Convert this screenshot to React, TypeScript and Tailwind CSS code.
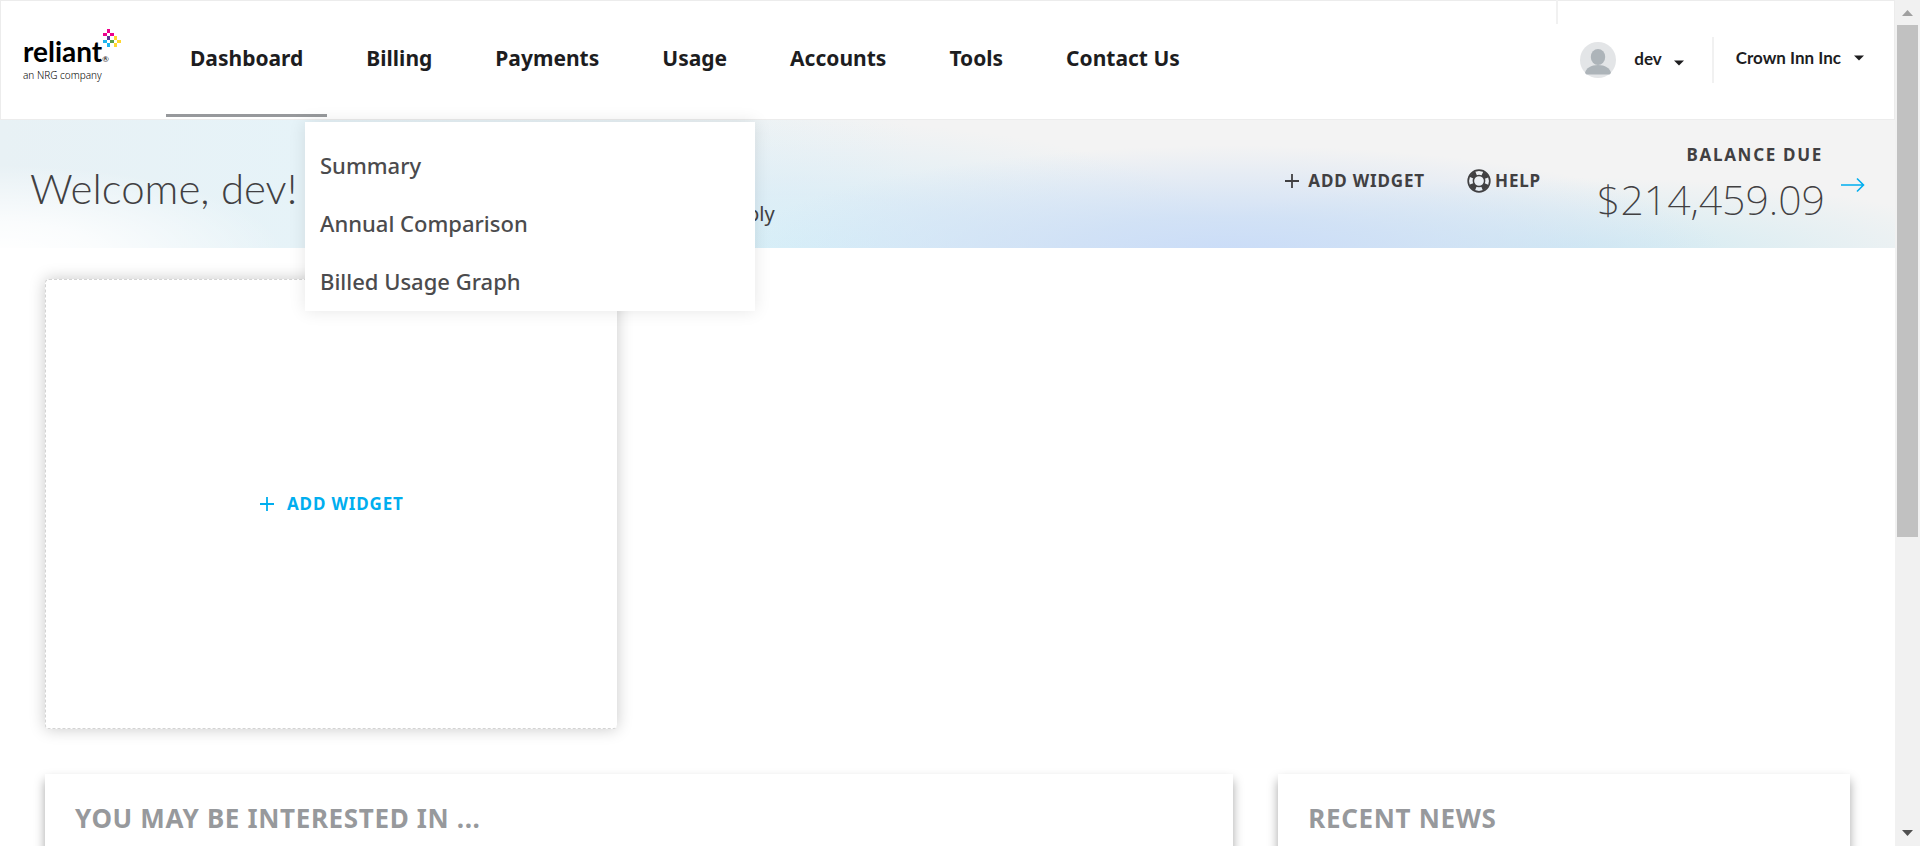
import type { ReactNode } from "react";

const navItems = ["Dashboard", "Billing", "Payments", "Usage", "Accounts", "Tools", "Contact Us"];
const menuItems = ["Summary", "Annual Comparison", "Billed Usage Graph"];

function Logo() {
  return (
    <a href="#" aria-label="reliant, an NRG company" className="relative block w-[100px] shrink-0 text-black">
      <span className="block font-['Lato',sans-serif] text-[28px] leading-[34px] font-bold">
        reliant<span className="text-[8px] leading-none font-normal">®</span>
      </span>
      <span className="block text-[10px] leading-[14px] font-light whitespace-nowrap">an NRG company</span>
      <svg className="absolute -top-[6px] left-[77px]" width="21" height="20" viewBox="0 0 21 20" aria-hidden="true">
        <path d="M7 1h3v4H7z M3 5h4v3H3z M10 5h4v3h-4z" fill="#ec008c" />
        <path d="M7 8h3v4H7z" fill="#5b3a94" />
        <path d="M14 8h3v4h-3z M17 12h4v3h-4z M14 15h3v4h-3z" fill="#ffd72e" />
        <path d="M10 12h4v3h-4z" fill="#5a9e45" />
        <path d="M3 12h4v3H3z M7 15h3v4H7z" fill="#1cb5f0" />
      </svg>
    </a>
  );
}

function Caret() {
  return (
    <svg width="10" height="6" viewBox="0 0 10 6" aria-hidden="true">
      <path d="M0 0.5h10L5 5.5z" fill="#1d1d1f" />
    </svg>
  );
}

function Plus() {
  return (
    <svg width="16" height="16" viewBox="0 0 16 16" aria-hidden="true">
      <path d="M8 1v14M1 8h14" stroke="currentColor" strokeWidth="1.8" fill="none" />
    </svg>
  );
}

function Avatar() {
  return (
    <svg width="36" height="36" viewBox="0 0 36 36" aria-hidden="true">
      <circle cx="18" cy="18" r="18" fill="#e3e5e7" />
      <ellipse cx="18" cy="15" rx="7.2" ry="8" fill="#adb4b9" />
      <path d="M5 31c1-5 6-8 13-8s12 3 13 8l-1.500 1.500h-23z" fill="#adb4b9" />
    </svg>
  );
}

function LifeRing() {
  return (
    <svg width="24" height="24" viewBox="0 0 24 24" fill="none" aria-hidden="true">
      <circle cx="12" cy="12" r="8" stroke="#414042" strokeWidth="5" strokeDasharray="6.283 6.283" strokeDashoffset="-3.142" />
      <circle cx="12" cy="12" r="10.800" stroke="#414042" strokeWidth="1.700" />
      <circle cx="12" cy="12" r="5.600" stroke="#414042" strokeWidth="1.500" />
    </svg>
  );
}

function Panel({ title, className }: { title: string; className: string }) {
  return (
    <section className={"h-[300px] bg-white px-[30px] pt-[26px] shadow-[0_6px_10px_rgba(0,0,0,0.35)] " + className}>
      <h2 className="text-[26px] leading-9 font-bold tracking-wide text-[#97999c]">{title}</h2>
    </section>
  );
}

function ToolButton({ icon, children, className }: { icon: ReactNode; children: string; className: string }) {
  return (
    <button
      type="button"
      className={"flex items-center text-[17px] leading-6 font-bold tracking-wider whitespace-nowrap " + className}
    >
      {icon}
      {children}
    </button>
  );
}

export default function App() {
  return (
    <div className="flex h-screen bg-white font-['Noto_Sans',sans-serif] text-[#414042]">
      <div className="relative flex min-w-0 flex-1 flex-col overflow-hidden">
        <header className="relative flex h-[120px] shrink-0 items-stretch border border-[#ececec] bg-white pr-[30px] pl-[22px]">
          <div className="flex items-start pt-[33px]">
            <Logo />
          </div>
          <nav className="ml-[43px] flex gap-[15px] pb-[2px]">
            {navItems.map((item, i) => (
              <a
                key={item}
                href="#"
                className={
                  "border-b-[3px] px-6 pt-[42px] text-[21px] leading-[30px] font-bold whitespace-nowrap text-[#1d1d1f] " +
                  (i === 0 ? "border-[#97999c]" : "border-transparent")
                }
              >
                {item}
              </a>
            ))}
          </nav>
          <div className="relative ml-auto flex items-start pt-9 font-['Lato',sans-serif] text-[17px] font-bold text-[#1d1d1f]">
            <span className="absolute -top-px -left-6 h-6 w-[2px] bg-[#f1f1f1]" />
            <button type="button" className="mt-[5px] flex items-center">
              <Avatar />
              <span className="-mt-[2px] ml-[18px]">dev</span>
              <span className="mt-[6px] ml-3">
                <Caret />
              </span>
            </button>
            <span className="ml-7 h-[46px] w-[2px] bg-[#f1f1f1]" />
            <button type="button" className="ml-[22px] flex h-[42px] items-center gap-[13px] whitespace-nowrap">
              Crown Inn Inc
              <Caret />
            </button>
          </div>
        </header>

        <section className="flex h-32 shrink-0 items-start bg-[#f3f3f3] bg-[radial-gradient(ellipse_15%_70%_at_0%_105%,rgba(255,255,255,1)_0%,rgba(255,255,255,0.8)_35%,rgba(255,255,255,0)_100%),radial-gradient(ellipse_26%_85%_at_65%_105%,rgba(200,219,248,0.95)_0%,rgba(205,223,246,0.85)_35%,rgba(243,243,243,0)_100%),radial-gradient(ellipse_22%_60%_at_83%_105%,rgba(203,233,242,0.9)_0%,rgba(203,233,242,0)_100%),radial-gradient(ellipse_24%_105%_at_42%_105%,rgba(215,240,248,1)_0%,rgba(215,236,247,0.7)_45%,rgba(243,243,243,0)_100%),linear-gradient(90deg,#e8f1f5_0%,#e6f3f8_16%,#e8f2f6_34%,#f3f3f3_48%,#f3f3f3_100%)] pr-[30px] pl-[30px]">
          <h1 className="w-[717px] shrink-0 pt-[40px] font-['Lato',sans-serif] text-[42px] leading-[56px] font-light whitespace-nowrap">
            Welcome, dev!
          </h1>
          <p className="pt-[80px] text-[20px] leading-7">ply</p>
          <div className="ml-auto flex">
            <ToolButton icon={<Plus />} className="mt-[49px] h-6 gap-2">
              ADD WIDGET
            </ToolButton>
            <ToolButton icon={<LifeRing />} className="mt-[49px] ml-[42px] h-6 gap-1">
              HELP
            </ToolButton>
            <div className="ml-14 pt-[23px] text-right">
              <h2 className="pr-[2px] text-[17px] leading-6 font-bold tracking-widest">BALANCE DUE</h2>
              <p className="pt-1 text-[41px] leading-[56px] font-extralight">$214,459.09</p>
            </div>
            <a href="#" aria-label="View balance" className="mt-[57px] ml-4 text-[#00aeef]">
              <svg width="24" height="16" viewBox="0 0 24 16" aria-hidden="true">
                <path d="M0 8h22M16 1.500l6.500 6.500l-6.500 6.500" stroke="currentColor" strokeWidth="1.600" fill="none" />
              </svg>
            </a>
          </div>
        </section>

        <main className="grid grid-cols-3 gap-[45px] px-[45px] pt-[31px]">
          <div className="flex h-[450px] items-center justify-center rounded-sm border border-r-0 border-dashed border-[#d4d4d4] bg-white shadow-[0_0_16px_rgba(0,0,0,0.22)]">
            <ToolButton icon={<Plus />} className="gap-3 text-[#00aeef]">
              ADD WIDGET
            </ToolButton>
          </div>
          <Panel title="YOU MAY BE INTERESTED IN ..." className="col-span-2 col-start-1" />
          <Panel title="RECENT NEWS" className="" />
        </main>

        <ul className="absolute top-[122px] left-[305px] w-[450px] bg-white px-[15px] pt-[14px] pb-px shadow-[0_0_16px_rgba(0,0,0,0.1)]">
          {menuItems.map((item) => (
            <li key={item}>
              <a href="#" className="block text-[22px] leading-[58px] font-medium text-[#4b4b4d]">
                {item}
              </a>
            </li>
          ))}
        </ul>
      </div>

      <div aria-hidden="true" className="flex w-[25px] shrink-0 flex-col items-center bg-[#f1f1f1]">
        <svg className="shrink-0" width="25" height="25" viewBox="0 0 25 25">
          <path d="M7 16h11l-5.500-6z" fill="#a0a0a0" />
        </svg>
        <div className="h-[512px] w-[21px] bg-[#c1c1c1]" />
        <svg className="mt-auto shrink-0" width="25" height="25" viewBox="0 0 25 25">
          <path d="M7 9h11l-5.500 6z" fill="#505050" />
        </svg>
      </div>
    </div>
  );
}
